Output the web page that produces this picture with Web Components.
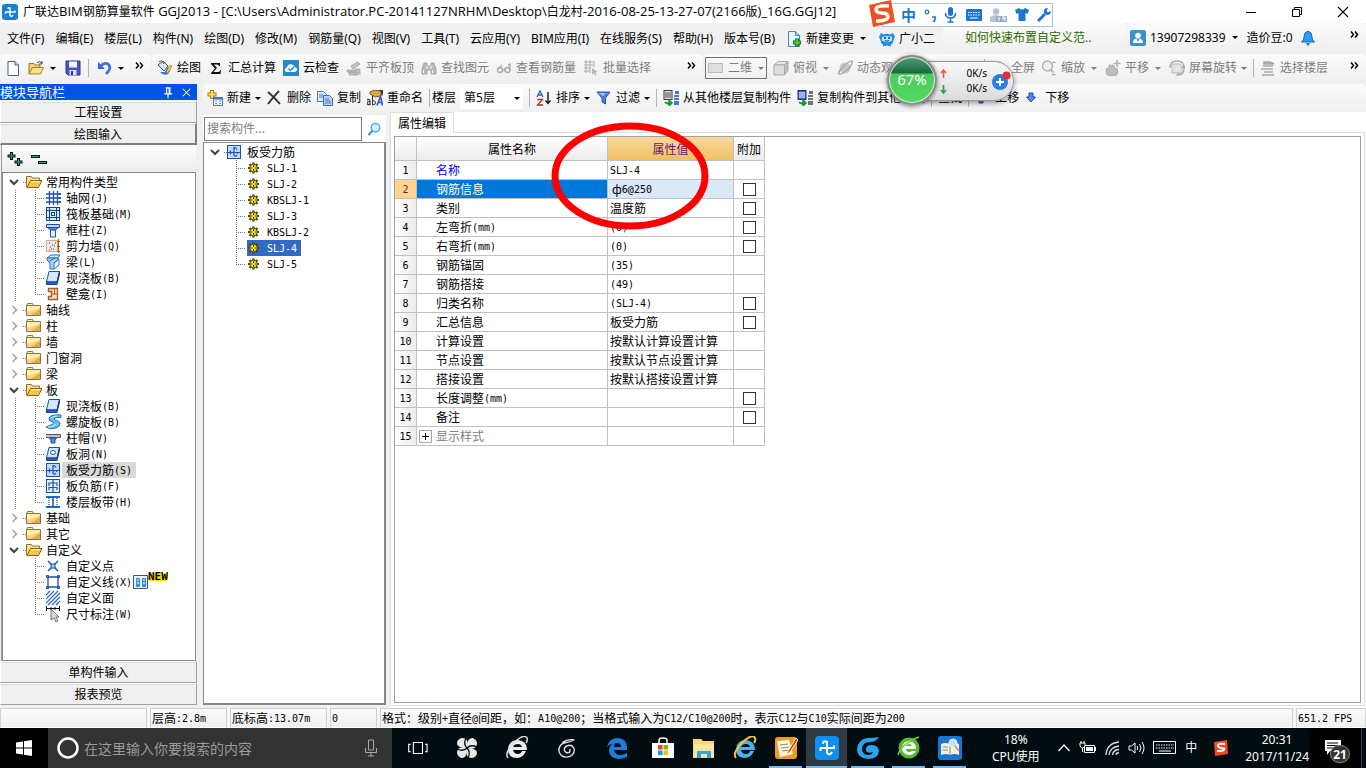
<!DOCTYPE html>
<html lang="zh-CN">
<head>
<meta charset="utf-8">
<title>广联达BIM钢筋算量软件 GGJ2013</title>
<style>
:root{--ui:"Noto Sans","Noto Sans CJK SC",sans-serif;--song:"Noto Sans CJK SC",sans-serif;--latin:"DejaVu Sans Mono",monospace}
body{margin:0;min-height:100vh;display:flex;flex-direction:column;position:relative;background:#f0f0f0;font:12px/16px var(--ui);color:#000;overflow-x:hidden}
</style>
</head>
<body>
<title-bar>广联达BIM钢筋算量软件 GGJ2013 - [C:\Users\Administrator.PC-20141127NRHM\Desktop\白龙村-2016-08-25-13-27-07(2166版)_16G.GGJ12]</title-bar>

<bar-row class="menu">
  <tool-band kind="flat">
    <menu-item>文件(F)</menu-item><menu-item>编辑(E)</menu-item><menu-item>楼层(L)</menu-item><menu-item>构件(N)</menu-item><menu-item>绘图(D)</menu-item><menu-item>修改(M)</menu-item><menu-item>钢筋量(Q)</menu-item><menu-item>视图(V)</menu-item><menu-item>工具(T)</menu-item><menu-item>云应用(Y)</menu-item><menu-item>BIM应用(I)</menu-item><menu-item>在线服务(S)</menu-item><menu-item>帮助(H)</menu-item><menu-item>版本号(B)</menu-item>
    <tool-item icon="docplus" caret>新建变更</tool-item><tool-item icon="mascot">广小二</tool-item>
  </tool-band>
  <tool-band kind="tip"><tip-link>如何快速布置自定义范..</tip-link></tool-band>
  <tool-band kind="account" more><tool-item icon="user" caret>13907298339</tool-item><tool-item>造价豆:0</tool-item><tool-item icon="bell" name="通知"></tool-item></tool-band>
</bar-row>

<bar-row>
  <tool-band kind="file" more><tool-item icon="new" name="新建"></tool-item><tool-item icon="open" name="打开" caret></tool-item><tool-item icon="save" name="保存"></tool-item><bar-sep></bar-sep><tool-item icon="undo" name="撤销" caret></tool-item></tool-band>
  <tool-band kind="draw" more><tool-item icon="paint">绘图</tool-item><tool-item icon="sigma">汇总计算</tool-item><tool-item icon="cloud">云检查</tool-item><tool-item icon="align" off>平齐板顶</tool-item><tool-item icon="binoc" off>查找图元</tool-item><tool-item icon="glasses" off>查看钢筋量</tool-item><tool-item icon="batch" off>批量选择</tool-item></tool-band>
  <tool-band kind="view" more><tool-item icon="rect" boxed caret off>二维</tool-item><tool-item icon="cube" caret off>俯视</tool-item><tool-item icon="orbit" off>动态观</tool-item><bar-sep wide></bar-sep><tool-item icon="mag" off>全屏</tool-item><tool-item icon="zoom" caret off>缩放</tool-item><tool-item icon="hand" caret off>平移</tool-item><tool-item icon="rotate" caret="near" off>屏幕旋转</tool-item><bar-sep></bar-sep><tool-item icon="floors" off>选择楼层</tool-item></tool-band>
</bar-row>

<work-area>
  <side-dock slot="dock">
    <tree-view>
      <tree-node icon="fopen" state="open">常用构件类型</tree-node>
      <tree-node level="2" icon="grid" rail>轴网(J)</tree-node>
      <tree-node level="2" icon="raft" rail>筏板基础(M)</tree-node>
      <tree-node level="2" icon="column" rail>框柱(Z)</tree-node>
      <tree-node level="2" icon="wall" rail>剪力墙(Q)</tree-node>
      <tree-node level="2" icon="beam" rail>梁(L)</tree-node>
      <tree-node level="2" icon="slab" rail>现浇板(B)</tree-node>
      <tree-node level="2" icon="niche" rail last>壁龛(I)</tree-node>
      <tree-node icon="fold" state="shut">轴线</tree-node>
      <tree-node icon="fold" state="shut">柱</tree-node>
      <tree-node icon="fold" state="shut">墙</tree-node>
      <tree-node icon="fold" state="shut">门窗洞</tree-node>
      <tree-node icon="fold" state="shut">梁</tree-node>
      <tree-node icon="fopen" state="open">板</tree-node>
      <tree-node level="2" icon="slab" rail>现浇板(B)</tree-node>
      <tree-node level="2" icon="spiral" rail>螺旋板(B)</tree-node>
      <tree-node level="2" icon="cap" rail>柱帽(V)</tree-node>
      <tree-node level="2" icon="hole" rail>板洞(N)</tree-node>
      <tree-node level="2" icon="rebar" rail current>板受力筋(S)</tree-node>
      <tree-node level="2" icon="negbar" rail>板负筋(F)</tree-node>
      <tree-node level="2" icon="strip" rail last>楼层板带(H)</tree-node>
      <tree-node icon="fold" state="shut">基础</tree-node>
      <tree-node icon="fold" state="shut">其它</tree-node>
      <tree-node icon="fopen" state="open">自定义</tree-node>
      <tree-node level="2" icon="point">自定义点</tree-node>
      <tree-node level="2" icon="line" fresh>自定义线(X)</tree-node>
      <tree-node level="2" icon="area">自定义面</tree-node>
      <tree-node level="2" icon="dim" last>尺寸标注(W)</tree-node>
    </tree-view>
  </side-dock>
  <tool-band slot="tools" kind="edit"><tool-item icon="add" caret="near">新建</tool-item><tool-item icon="del">删除</tool-item><tool-item icon="copy">复制</tool-item><tool-item icon="rename">重命名</tool-item><bar-sep></bar-sep><floor-picker></floor-picker><bar-sep></bar-sep><tool-item icon="sort" caret="near">排序</tool-item><tool-item icon="filter" caret="near">过滤</tool-item><bar-sep></bar-sep><tool-item icon="from">从其他楼层复制构件</tool-item><tool-item icon="to">复制构件到其他楼层</tool-item><bar-sep></bar-sep><tool-item>查找</tool-item><bar-sep></bar-sep><tool-item icon="up">上移</tool-item><tool-item icon="down">下移</tool-item></tool-band>
  <component-list slot="list">
    <tree-node icon="rebar" state="open">板受力筋</tree-node>
    <tree-node level="2" icon="gear">SLJ-1</tree-node>
    <tree-node level="2" icon="gear">SLJ-2</tree-node>
    <tree-node level="2" icon="gear">KBSLJ-1</tree-node>
    <tree-node level="2" icon="gear">SLJ-3</tree-node>
    <tree-node level="2" icon="gear">KBSLJ-2</tree-node>
    <tree-node level="2" icon="gear" selected>SLJ-4</tree-node>
    <tree-node level="2" icon="gear" last>SLJ-5</tree-node>
  </component-list>
  <property-editor slot="editor"></property-editor>
</work-area>

<status-bar></status-bar>
<task-bar></task-bar>
<ime-bar></ime-bar>
<speed-ball></speed-ball>

<script>
const ICONS={
new:'<path d="M3 1.5h7l3.500 3.500v10.500H3z" fill="#fff" stroke="#4a5f86"/><path d="M10 1.500V5h3.500" fill="#cfdcf2" stroke="#4a5f86"/>',
open:'<path d="M1 14V3.500h5l1 1.500h5v3" fill="#f0cf72" stroke="#9c7a22"/><path d="M1 14l3.500-6.500H15.500L12.500 14z" fill="#fbe08a" stroke="#a8832a"/><path d="M9 2.500q3-2 5 1m0-2.500v3h-3" fill="none" stroke="#444"/>',
save:'<path d="M1 1h14v14H3l-2-2z" fill="#4a53c4" stroke="#2c3390"/><path d="M4 1.500h8v6H4z" fill="#f2f4ff"/><path d="M4.500 10h7v5h-7z" fill="#d9dcf5"/><path d="M6 11h2v4H6z" fill="#2c3390"/>',
undo:'<path d="M2 2v7h7z" fill="#3467c8"/><path d="M4 7q4-5 8-3 4.500 4-2 10" fill="none" stroke="#3f74d6" stroke-width="2.800"/>',
docplus:'<path d="M2.500.500h7l4 4v11h-11z" fill="#eaf6ff" stroke="#3f87b8"/><path d="M9.500.500v4h4" fill="#9fd0ee" stroke="#3f87b8"/><path d="M11 7.500v8M7 11.500h8" stroke="#1d7a1a" stroke-width="4"/><path d="M11 8.500v6M8 11.500h6" stroke="#53c63e" stroke-width="2"/>',
mascot:'<path d="M0 6l2-4 3 1.500q3-1.500 6 0L14 2l2 4-1.500 3q0 3-2 4l-1 2.500-3.500-1-3.500 1-1-2.500q-2-1-2-4z" fill="#1f8fe0"/><path d="M3 6q5-2 10 0v3.500q-5 3.500-10 0z" fill="#b9e2fb"/><circle cx="6" cy="7" r="1" fill="#063a72"/><circle cx="10" cy="7" r="1" fill="#063a72"/><path d="M6 9.500q2 1.500 4 0" stroke="#063a72" fill="none"/>',
user:'<rect width="16" height="16" rx="2" fill="#3a93c8"/><circle cx="8" cy="5.500" r="2.800" fill="#fff"/><path d="M3 13q0-5 5-4.500 5-.500 5 4.500z" fill="#fff"/><path d="M6.500 9l1.500 3 1.500-3" fill="#3a93c8"/>',
bell:'<path d="M8 1q4 1 4 6 0 3 2.500 5h-13Q4 10 4 7q0-5 4-6z" fill="#2e9bff" stroke="#1768c0"/><path d="M6 13h4l-2 3z" fill="#1768c0"/>',
paint:'<path d="M1 5l5-4 5 5-4 5z" fill="#dbe6f8" stroke="#3b4d77"/><path d="M2 2q3-3 5 2" fill="none" stroke="#3b4d77"/><path d="M11 7l2 4-2 2-3-1z" fill="#39476a"/><path d="M15 6l-4 7-2 .500.500-2.500L13 5z" fill="#f3c94c" stroke="#8c6a13" stroke-width=".6"/><path d="M3 12q3 4 9 2l-3-2z" fill="#3a74d8"/>',
sigma:'<path d="M3 3h9v3h-1q0-1.500-2-1.500H6L9 8l-3.500 4H10q2 0 2.500-2h.500l-.500 4H3v-1l4-4.500L3 4z" fill="#111"/>',
cloud:'<rect width="16" height="16" fill="#2687cc"/><path d="M4 12q-3-.500-2-3 .500-1.500 2-1.500Q5 3.500 9 4.500q2 .500 2.500 2.500 3 .500 2.500 3-.500 2-3 2z" fill="#fff"/><path d="M5.500 8.500L7.500 10.500 11 7" stroke="#2687cc" stroke-width="1.500" fill="none"/>',
align:'<path d="M5 6l7-4 2 2-7 5z" fill="#c4c4c4" stroke="#aaa"/><path d="M1 10h9v2H1zM3 12h9v3H3zM9 9h5v6" fill="#bdbdbd" stroke="#9d9d9d" stroke-width=".7"/>',
binoc:'<path d="M3 3h3v3h4V3h3l2 6v5h-5v-4H6v4H1V9z" fill="#b9b9b9" stroke="#9a9a9a" stroke-width=".8"/><path d="M2.500 10v3M11.500 10v3M6 6v3M10 6v3" stroke="#fff"/>',
glasses:'<circle cx="4" cy="10" r="2.500" fill="none" stroke="#aaa" stroke-width="1.500"/><circle cx="11.500" cy="10" r="2.500" fill="none" stroke="#aaa" stroke-width="1.500"/><path d="M6.500 10h2.500M2 9l4-4M14 10V4l-2 1" stroke="#aaa" fill="none" stroke-width="1.300"/>',
batch:'<path d="M1 2h9M1 5h9M1 8h7M1 11h6M3 0v13M7 0v13M11 1v6" stroke="#aaa"/><path d="M9 8l6 4-3 .500 2 3-2-.500-1.500-2L9 15z" fill="#b5b5b5"/>',
rect:'<rect x=".500" y="3.500" width="14" height="9" fill="#dedede" stroke="#bbb"/>',
cube:'<path d="M1 5l4-3.500h10L11.500 5z" fill="#e8e8e8" stroke="#aaa"/><path d="M1 5h10.500v10H1z" fill="#ddd" stroke="#aaa"/><path d="M11.500 5L15 1.500v9L11.500 15z" fill="#bdbdbd" stroke="#aaa"/>',
orbit:'<circle cx="8" cy="8" r="5.500" fill="#c9c9c9"/><path d="M3 14q-4 0 3-7T15 1q1 4-5 9T3 14z" fill="none" stroke="#aaa" stroke-width="1.500"/>',
mag:'<circle cx="7" cy="7" r="5" fill="#eee" stroke="#b4b4b4" stroke-width="1.500"/><path d="M10.500 10.500l4 4" stroke="#b4b4b4" stroke-width="2.500"/>',
zoom:'<circle cx="6.500" cy="6" r="5" fill="#eee" stroke="#b4b4b4" stroke-width="1.500"/><path d="M9.500 9.500l3 3" stroke="#b4b4b4" stroke-width="2"/><path d="M13 1l2 2h-4zM10 14h5l-2.500 2z" fill="#aaa"/>',
hand:'<path d="M2 15l-1-6 3-1V5q2-1 2.500 2l1-2q2 0 2 3l3 1v4l-2 3z" fill="#bdbdbd" stroke="#a7a7a7"/><path d="M12 0v7M8.500 3.500h7" stroke="#b0b0b0" stroke-width="1.600"/>',
rotate:'<path d="M3 4h8l2 2v7H3z" fill="#e4e4e4" stroke="#bbb"/><path d="M1 8Q1 1 8 1q7 0 7 7M13 6l2 3 1-3M15 10q-1 5-7 5l2-2" fill="none" stroke="#aaa" stroke-width="1.300"/>',
floors:'<path d="M4 2h6l4 2H4zM3 6h10M1 9h12M4 12h9M2 15h12" fill="#bbb" stroke="#a9a9a9" stroke-width="1.600"/>',
add:'<path d="M5 0v9M.500 4.500h9" stroke="#a87c06" stroke-width="4"/><path d="M5 1v7M1.500 4.500h7" stroke="#ffe45a" stroke-width="2"/><rect x="6.500" y="7.500" width="9" height="8" fill="#eef4ff" stroke="#5779b5"/><path d="M6 8.500h10" stroke="#3d6fc9" stroke-width="2"/><path d="M8 11h2M12 11h2M8 13.500h2M12 13.500h2" stroke="#6c89bd"/>',
del:'<path d="M1 2q6 5 12 12M12 1Q7 6 1 14" stroke="#333" stroke-width="1.900" fill="none"/>',
copy:'<path d="M.500 1.500h6l3 3v7h-9z" fill="#dfeaff" stroke="#4a76c4"/><path d="M6.500 5.500h6l3 3v7h-9z" fill="#bcd3fb" stroke="#3a66b4"/><path d="M2 5h4M2 7h4M8 9h4M8 11h6M8 13h6" stroke="#4a76c4"/>',
rename:'<path d="M3 2l5-2 7 1-1 5-6 1-5-3z" fill="#d9a93f" stroke="#7c5b15"/><path d="M12 0h4v6z" fill="#3c3c3c"/><path d="M0 10q3-1.500 3 1v3.500q-3 .500-3-1.500 0-1.500 3-1.500" stroke="#333" fill="none" stroke-width="1.200"/><path d="M5.500 6v9q3.500 0 3-3-1-2-3-1" stroke="#333" fill="none"/><path d="M10 15.500l3.500-9 2 9M11 12.500h4" stroke="#2e5ed0" stroke-width="1.700" fill="none"/>',
sort:'<path d="M1 7l3-6 3 6M2 5h4" stroke="#3a58b8" fill="none" stroke-width="1.300"/><path d="M1.500 9.500h5l-5 5.500H7" stroke="#a33" fill="none" stroke-width="1.300"/><path d="M12 2v11" stroke="#111" stroke-width="1.400"/><path d="M9.500 10.500l2.500 3 2.500-3" stroke="#111" stroke-width="1.400" fill="none"/>',
filter:'<path d="M1 2h13L9.500 8v6L6 12V8z" fill="#4f83e0" stroke="#2855a8"/><path d="M3 3h7L7 6z" fill="#a9c7ff"/>',
from:'<rect x="1" y=".500" width="8" height="9" fill="#e9e9e9" stroke="#333"/><path d="M2 3h6M2 5h6M2 7h6" stroke="#444"/><path d="M12 1h4v3h-4zM11 5h5v2h-5zM11 8h5v2h-5zM11 11h5v4h-5z" fill="#3f7ad6"/><path d="M2 12q2 3 6 1M6 10l3 3-3 3z" stroke="#149a2b" stroke-width="1.500" fill="#149a2b"/>',
to:'<rect x="1" y=".500" width="8" height="9" fill="#3c6ad0" stroke="#1b3270"/><path d="M2 3h6M2 5h6M2 7h6" stroke="#fff"/><path d="M12 1h4v3h-4zM11 5h5v2h-5zM11 8h5v2h-5zM11 11h5v4h-5z" fill="#69727e"/><path d="M2 12q2 3 6 1M6 10l3 3-3 3z" stroke="#149a2b" stroke-width="1.500" fill="#149a2b"/>',
up:'<path d="M6 4l4.500 4.500H8V13H4V8.500H1.500z" fill="#5689ee" stroke="#2144a0"/>',
down:'<path d="M6 12l4.500-5H8V3H4v4H1.500z" fill="#5689ee" stroke="#2144a0"/>',
fold:'<path d="M.500 3.500l1-2h5l1 2" fill="#fbe9b0" stroke="#8d7434"/><path d="M.500 3.500h14v10H.500z" fill="#f7d574" stroke="#8d7434"/><path d="M1 4h13l-2 3-11 3z" fill="#fdeeb5"/><path d="M14 7v6H5z" fill="#c98f1d" opacity=".55"/>',
fopen:'<path d="M.500 13V2.500h5l1 1.500h7v3" fill="#fbe08a" stroke="#8d7434"/><path d="M1 13.500L4.500 6.500h11.500L12.500 13.500z" fill="#f7c64a" stroke="#8a6416"/><path d="M5 7.500h9" stroke="#fff3c4"/>',
grid:'<path d="M0 4h14M0 8h14M0 12h14M3.500 1v14M7.500 1v14M11.500 1v14" stroke="#1e50b0" stroke-width="1.300"/><path d="M13 3h2v2h-2zM13 7h2v2h-2zM13 11h2v2h-2z" fill="#1e50b0"/>',
raft:'<rect x=".500" y="1.500" width="13" height="13" fill="#d7e9ff" stroke="#12448f"/><path d="M3.500 2v12M10.500 2v12M1 4.500h12M1 11.500h12" stroke="#12448f"/><rect x="5.500" y="6.500" width="3" height="3" fill="#fff" stroke="#12448f"/>',
column:'<path d="M.500 2.500h13v3h-13z" fill="#b9d4ff" stroke="#1c4da5"/><path d="M2 6l2.500 2h5L12 6" fill="#5e93e8" stroke="#1c4da5"/><path d="M4.500 8h5v7h-5z" fill="#e8f2ff" stroke="#1c4da5"/>',
wall:'<path d="M.500 2.500h11v11h-11z" fill="#efe9e4" stroke="#d9a88c"/><path d="M12.500 1v14M11 3.500h3M11 8.500h3M11 13.500h3" stroke="#b8561c" stroke-width="1.200"/><path d="M3 5h1M6 7h1M4 9h1M7 11h1M9 5h1M3 12h1M8 8h1M5 11h1" stroke="#444"/>',
beam:'<path d="M1 4l4-3h9l-2 3z" fill="#d9edff" stroke="#2273c4"/><path d="M1 4h11v2L8 9v6H4V9L1 6z" fill="#a9d3fa" stroke="#2273c4"/><path d="M8 9l5-4v6l-5 4M2 8l7-4" stroke="#2273c4" fill="none"/>',
slab:'<path d="M3 1.500h10.500L11 12H.500z" fill="#d5e4ff" stroke="#1b4fae"/><path d="M.500 12H11l2.500-10.500V4L11 14.500H.500z" fill="#2c63cc" stroke="#1b3f90"/>',
niche:'<path d="M2.500 2.500h9v11h-9v-3h3v-5h-3z" fill="#f7dfc9" stroke="#b2591a" stroke-width="1.400"/><path d="M5 8h6M8.500 3v5" stroke="#b2591a"/>',
spiral:'<path d="M15 1Q5 0 3 4q-1 3 4 4 2 1-1 2.500L0 13q4 3 10 1 5-2 4-5-1-2-5-3-2-1 0-2 3-1 6-.500z" fill="#62bdf0" stroke="#2572bf"/><path d="M5 4q2-2 6-2M2 13q6 0 8-3" stroke="#d5f2ff" fill="none"/>',
cap:'<path d="M-.500 4.500h15v3h-15z" fill="#c4c4c4" stroke="#555"/><path d="M3.500 8h7L9 10v3H5v-3z" fill="#4d8be6" stroke="#1d4ea6"/>',
hole:'<path d="M3 1.500h10.500L11 12H.500z" fill="#d5e4ff" stroke="#1b4fae"/><path d="M.500 12H11l2.500-10.500V4L11 14.500H.500z" fill="#2c63cc" stroke="#1b3f90"/><ellipse cx="7" cy="6.500" rx="2.500" ry="2" fill="#fff" stroke="#1b4fae"/>',
rebar:'<rect x=".500" y="1.500" width="13" height="13" fill="#c3daff" stroke="#1d4fae"/><path d="M7 3v8.500q2 1.500 3-.500M1 8.500h12M7 4.500q2-1.500 3 1M3.500 6.500v4M10.500 8v2" stroke="#1d4fae" stroke-width="1.200" fill="none"/>',
negbar:'<rect x=".500" y="1.500" width="13" height="13" fill="#e2edff" stroke="#1d4fae"/><path d="M7 2v12M3 8V5h8v3M3 12V9.500h8V12" stroke="#1d4fae" stroke-width="1.200" fill="none"/>',
strip:'<path d="M0 3h14M0 13h14" stroke="#1d6cc8" stroke-width="2"/><path d="M7 3v10" stroke="#1d4fae" stroke-width="1.500"/><path d="M3 4v9M11 4v9" stroke="#222" stroke-dasharray="1 1"/>',
point:'<path d="M2 3l10 10M12 3L2 13" stroke="#1c55b8" stroke-width="1.500"/><path d="M5 6h4v4H5z" fill="#9cc4ff" stroke="#1c55b8"/>',
line:'<path d="M2 3h10v10H2z" fill="none" stroke="#1c4da5" stroke-width="1.300"/><path d="M.500 1.500h2v2h-2zM11.500 1.500h2v2h-2zM.500 12.500h2v2h-2zM11.500 12.500h2v2h-2z" fill="#4a8bf0" stroke="#1c4da5"/>',
area:'<path d="M0 5l4-4M0 9l8-8M0 13L12 1M2 15L14 3M6 15l8-8M10 15l4-4" stroke="#2468c8" stroke-width="1.200"/>',
dim:'<path d="M.500 0v5M13.500 0v5M1 2.500h12M5 1v3M9 1v3" stroke="#111"/><path d="M5 3l8 8h-3l2 4-2 1-2-4-3 2z" fill="#d5d5d5" stroke="#777"/>',
gear:'<path d="M6.500 2.500v11M1 8h11M2.600 4.100l7.800 7.800M10.400 4.100l-7.800 7.800" stroke="#4c4200" stroke-width="2.200"/><circle cx="6.500" cy="8" r="3.800" fill="#f2df2c" stroke="#564b00"/><path d="M6.500 5v6M3.500 8h6" stroke="#564b00"/><circle cx="6.500" cy="8" r="1" fill="#fff88a"/>',
find:'<circle cx="9" cy="6" r="4.500" fill="#d5efff" stroke="#58aeea" stroke-width="1.600"/><path d="M6 9l-4.500 5" stroke="#4b9bdc" stroke-width="2.400"/>',
pin:'<path d="M5 3h5M6 3v6M9.500 3v6M8.700 3v6M3.500 9.500h8.500M7.500 9.500V14" stroke="#fff" stroke-width="1.200" fill="none"/>',
shut:'<path d="M4 4l8 8M12 4l-8 8" stroke="#fff" stroke-width="1.100"/>',
plus2:'<path d="M4.500 1v8M.500 5h8M11.500 7v8M7.500 11h8" stroke="#111" stroke-width="3"/><path d="M4.500 2v6M1.500 5h6M11.500 8v6M8.500 11h6" stroke="#1aa89a"/>',
minus2:'<path d="M0 5.500h9M7 11.500h9" stroke="#111" stroke-width="3"/><path d="M1 5.500h7M8 11.500h7" stroke="#1aa89a"/>',
logo:'<rect width="16" height="16" rx="3" fill="#1682d4"/><path d="M8 3.500v8q2 2 3-.500M3 8h10V6.500M3.500 8v2M8 4q-2-1-2 1" stroke="#fff" stroke-width="1.400" fill="none"/>'
};
const svg=(n,s=16)=>`<svg viewBox="0 0 16 16" width="${s}" height="${s}" aria-hidden="true">${ICONS[n]||''}</svg>`;
/* Song-style runs: Latin characters take half the width of a Chinese one */
const song=t=>t.replace(/[\x21-\x7e]+(?: [\x21-\x7e]+)*/g,m=>`<span class="l">${m}</span>`);
const BASE=`*{box-sizing:border-box}svg{display:block;flex:none}button{font:inherit;color:inherit;border:0;background:none;padding:0;margin:0}.l{font:10px/1 var(--latin);vertical-align:1px}:host{white-space:nowrap;box-sizing:border-box}`;
class Part extends HTMLElement{
  constructor(){super();this.attachShadow({mode:'open'})}
  connectedCallback(){this.shadowRoot.innerHTML=`<style>${BASE}${this.css()}</style>${this.html()}`}
}
const def=(n,css,html)=>customElements.define(n,class extends Part{css(){return css}html(){return html(this)}});

def('title-bar',`:host{display:flex;align-items:center;height:23px;background:#fff;padding-left:2px;gap:5px;flex:none}
.w{font:13px/16px "Open Sans",sans-serif}
.win{display:flex;margin-left:auto;padding-top:0}.win button{width:46px;height:23px;display:grid;place-items:center}`,
e=>`${svg('logo')}<span>${e.textContent.replace(/[\x20-\x7e]+/g,m=>`<span class="w">${m}</span>`)}</span><div class="win">
<button aria-label="最小化"><svg width="12" height="12"><path d="M1 6.500h10" stroke="#000"/></svg></button>
<button aria-label="还原"><svg width="12" height="12"><path d="M1.500 3.500h7v7h-7zM3.500 3V1.500h7v7H9" stroke="#000" fill="none"/></svg></button>
<button aria-label="关闭"><svg width="12" height="12"><path d="M1 1l10 10M11 1L1 11" stroke="#000" stroke-width="1.100"/></svg></button></div>`);

def('bar-row',`:host{display:flex;height:30px;flex:none;gap:1px;background:#f0f0f0}:host(.menu){height:31px}`,()=>`<slot></slot>`);

def('tool-band',`:host{display:flex;align-items:center;gap:7px;padding:0 5px;border-radius:4px;background:linear-gradient(#fbfbfb,#efefef);flex:none;margin-bottom:2px}
:host([kind=flat]){background:none;gap:11px;padding:0 7px;margin:0}
:host([kind=tip]){flex:1;padding-left:22px}
:host([kind=account]){width:239px;padding-left:3px}
:host([kind=file]){width:151px}:host([kind=draw]){width:551px}:host([kind=view]){flex:1;padding-left:1px;gap:6px;min-width:0}
:host([kind=edit]){height:28px;margin:0;padding-left:4px;gap:6px}
.more{align-self:flex-start;margin:8px 2px 0 auto}`,
e=>`<slot></slot>${e.hasAttribute('more')?'<button class="more" aria-label="更多"><svg width="9" height="7"><path d="M1 .500l2.500 3L1 6.500M5 .500l2.500 3L5 6.500" stroke="#000" stroke-width="1.500" fill="none"/></svg></button>':''}`);

def('bar-sep',`:host{width:1px;height:18px;background:#b4b4b4;flex:none}:host([wide]){margin-left:85px}`,()=>'');
def('menu-item',`:host{display:block}`,()=>`<button><slot></slot></button>`);
def('tip-link',`:host{display:block}a{color:#2d6a00;text-decoration:none}`,()=>`<a href="#"><slot></slot></a>`);
def('tool-item',`:host{display:block;flex:none}button{display:flex;align-items:center;gap:4px}
:host([off]){color:#7d7d7d}:host([boxed]) button{border:1px solid #70707a;padding:2px 0 2px 2px}
.c{width:10px;display:grid;place-items:center}:host([caret=near]) .c{width:6px}`,
e=>{const t=e.textContent;return `<button${t?'':` aria-label="${e.getAttribute('name')}"`}>${e.hasAttribute('icon')?svg(e.getAttribute('icon')):''}${t?'<span><slot></slot></span>':''}${e.hasAttribute('caret')?'<span class="c"><svg width="6" height="3"><path d="M0 0h6L3 3z" fill="currentColor"/></svg></span>':''}</button>`});
def('floor-picker',`:host{display:flex;align-items:center;gap:4px;margin-left:-4px}
div{position:relative}select{appearance:none;font:inherit;border:0;background:#fff;width:63px;height:22px;padding:0 4px;color:#000}
svg{position:absolute;right:3px;top:10px}`,
()=>`<label for="f">楼层</label><div><select id="f"><option>第5层</option></select><svg width="6" height="3"><path d="M0 0h6L3 3z"/></svg></div>`);

def('work-area',`:host{display:flex;flex:1;gap:6px;background:#f0f0f0}
.dock{width:197px;display:flex;flex:none}.right{flex:1;display:flex;flex-direction:column;min-width:0}
.row{flex:1;display:flex;gap:4px}.list{width:183px;display:flex;flex:none}.ed{flex:1;display:flex}`,
()=>`<div class="dock"><slot name="dock"></slot></div><div class="right"><slot name="tools"></slot><div class="row"><div class="list"><slot name="list"></slot></div><div class="ed"><slot name="editor"></slot></div></div></div>`);

def('side-dock',`:host{display:flex;flex-direction:column;flex:1;padding-bottom:3px;font-family:var(--song)}
header{display:flex;align-items:center;background:#0054e3;color:#fff;height:16px;margin-bottom:1px}header b{font-weight:400;font-size:13px;margin-right:auto}
header button{margin-right:3px}
.nav{height:22px;flex:none;border:1px solid #a0a0a0;border-top-color:#fff;border-left-color:#fff;background:#f0f0f0;box-shadow:inset 0 1px #ddd;width:100%}
.nav.on{border-right:2px solid #808080;border-bottom:2px solid #808080}
.pane{flex:1;display:flex;flex-direction:column;margin:0 1px;border-left:1px solid #a0a0a0}
.tools{height:27px;display:flex;align-items:center;gap:8px;padding-left:5px;background:linear-gradient(#fdfdfd,#ececec)}
.tree{flex:1;border:1px solid #828790;background:#fff;padding-top:1px}`,
()=>`<header><b>模块导航栏</b><button aria-label="固定">${svg('pin',15)}</button><button aria-label="关闭">${svg('shut',15)}</button></header>
<button class="nav">工程设置</button><button class="nav on">绘图输入</button>
<div class="pane"><div class="tools"><button aria-label="展开">${svg('plus2')}</button><button aria-label="折叠">${svg('minus2')}</button></div><div class="tree"><slot></slot></div></div>
<button class="nav">单构件输入</button><button class="nav">报表预览</button>`);
def('tree-view',`:host{display:block}`,()=>`<slot></slot>`);

def('tree-node',`:host{display:flex;height:16px;padding-left:5px;align-items:center;font-family:var(--song);position:relative}
:host([level="2"]){padding-left:32px}
:host([rail]){background:repeating-linear-gradient(#777 0 1px,#fff 1px 2px) 12px 0/1px 100% no-repeat}
.dots{width:6px;height:1px;background:repeating-linear-gradient(90deg,#777 0 1px,#fff 1px 2px) 3px 0/3px 1px no-repeat}
.g{width:11px;height:16px;background:repeating-linear-gradient(90deg,#777 0 1px,#fff 1px 2px) 0 8px/10px 1px no-repeat,repeating-linear-gradient(#777 0 1px,#fff 1px 2px) 0 0/1px 100% no-repeat}
:host([last]) .g{background-size:10px 1px,1px 8px}
.t{padding:0 4px;height:16px;line-height:16px}
:host([current]) .t{background:#d9d9d9}
:host([selected]) .s{background:#316ac5}
:host([selected]) .t{color:#fff}
.s{display:flex;align-items:center}
.new{position:absolute;left:145px;top:-1px;font:bold 11px/8px var(--latin);background:#ffdc00;color:#000;border-radius:3px}`,
e=>{const s=e.getAttribute('state'),l2=e.getAttribute('level')==='2';
const lead=l2?'<i class="g"></i>':`<svg width="12" height="12">${s==='open'?'<path d="M2 4l4 4 4-4" stroke="#404040" stroke-width="2" fill="none"/>':'<path d="M4.500 2l4 4-4 4" stroke="#a0a0a0" stroke-width="1.500" fill="none"/>'}</svg><i class="dots"></i>`;
return `${lead}<span class="s">${svg(e.getAttribute('icon'))}<span class="t">${song(e.textContent)}</span></span>${e.hasAttribute('fresh')?'<svg width="15" height="16" style="margin-left:-3px"><path d="M.500 1.500h14v13H.500z" fill="#e8f3ff" stroke="#456"/><path d="M3 4h4v9H3zM9 4h4v9H9z" fill="#3d8fe8"/><path d="M4 6h2M4 9h2M10 6h2M10 9h2" stroke="#fff"/></svg><span class="new">NEW</span>':''}`});

def('component-list',`:host{display:flex;flex-direction:column;flex:1;padding:3px 0 3px;font-family:var(--song)}
form{display:flex;background:#fff;height:27px;padding:2px 0 1px 1px;margin:0}
input{flex:1;min-width:0;border:1px solid #7a7a7a;background:#fff;font:12px var(--song);padding:0 2px 4px;outline:0}input::placeholder{color:#808080}
form button{width:24px;display:grid;place-items:center}
.tree{flex:1;background:#fff;border:1px solid #828790;border-right-width:2px;border-bottom-width:2px;padding-top:1px}`,
()=>`<form><input aria-label="搜索构件" placeholder="搜索构件..."><button type="button" aria-label="搜索">${svg('find',15)}</button></form><div class="tree"><slot></slot></div>`);

const ROWS=[['名称','SLJ-4',0],['钢筋信息','ф6@250',1],['类别','温度筋',1],['左弯折(mm)','(0)',1],['右弯折(mm)','(0)',1],['钢筋锚固','(35)',0],['钢筋搭接','(49)',0],['归类名称','(SLJ-4)',1],['汇总信息','板受力筋',1],['计算设置','按默认计算设置计算',0],['节点设置','按默认节点设置计算',0],['搭接设置','按默认搭接设置计算',0],['长度调整(mm)','',1],['备注','',1],['显示样式','',0]];
def('property-editor',`:host{display:flex;flex-direction:column;flex:1;padding:0 1px 2px 0;font-family:var(--song);background:#fff}
.tabs{display:flex;height:21px;border-bottom:1px solid #dcdcdc}.tab{width:64px;height:21px;background:#fff;border:1px solid #dcdcdc;border-bottom:0;text-align:center}
.page{flex:1;border:1px solid #dcdcdc;border-top:0;padding:3px 3px 2px;display:flex}
.sheet{flex:1;border:1px solid #a0a0a0;position:relative}
table{border-collapse:separate;border-spacing:0;table-layout:fixed;width:370px}
th,td{border:solid #c0c0c0;border-width:0 1px 1px 0;padding:0;height:19px;line-height:18px;font-weight:400;text-align:left;overflow:hidden}
thead th{height:24px;line-height:22px;text-align:center;background:linear-gradient(#fff,#ececec)}
thead .hot{background:linear-gradient(#f9d99f,#f0c060);color:#6b1468}
tbody th{text-align:center;background:linear-gradient(90deg,#fff,#ececec)}
td:nth-child(2){padding-left:19px;position:relative}td:nth-child(3){padding-left:2px}td:nth-child(4){text-align:center}
tr.key td:nth-child(2){color:#00f}tr.on th{background:#ffd58c;color:#6b1468}tr.on td:nth-child(2){background:#0078d7;color:#fff}tr.on td:nth-child(3){background:#d9e9f7;padding-left:4px}
tr.dim td:nth-child(2){color:#808080}
input{appearance:none;width:13px;height:13px;border:1px solid #333;background:#fff;display:block;margin:0 auto}
.x{position:absolute;left:2px;top:3px;width:13px;height:13px;border:1px solid #a8a8a8;background:#fff;display:grid;place-items:center}
.ring{position:absolute;left:156px;top:-15px;pointer-events:none}`,
()=>`<div class="tabs"><button class="tab">属性编辑</button></div><div class="page"><div class="sheet"><table>
<colgroup><col style="width:22px"><col style="width:191px"><col style="width:126px"><col style="width:31px"></colgroup>
<thead><tr><th></th><th>属性名称</th><th class="hot">属性值</th><th>附加</th></tr></thead><tbody>${ROWS.map((r,i)=>`<tr class="${i==0?'key':i==1?'on':i==14?'dim':''}"><th>${song(''+(i+1))}</th><td>${i==14?'<button class="x" aria-label="展开"><svg width="9" height="9"><path d="M4.500 1v7M1 4.500h7" stroke="#000"/></svg></button>':''}${song(r[0])}</td><td>${song(r[1])}</td><td>${r[2]?`<input type="checkbox" aria-label="${r[0]}附加">`:''}</td></tr>`).join('')}</tbody></table>
<svg class="ring" width="160" height="108"><ellipse cx="79" cy="54" rx="75" ry="50" fill="none" stroke="#f00" stroke-width="7"/></svg></div></div>`);

def('status-bar',`:host{display:flex;height:20px;gap:3px;background:#f6f6f6;font-family:var(--song);flex:none}
span.b{border:1px solid #d0d0d0;border-bottom-color:#fff;background:linear-gradient(#fbfbfb,#efefef);padding-left:1px;line-height:18px;height:20px;overflow:hidden}`,
()=>[['',147],['层高:2.8m',77],['底标高:13.07m',97],['0',47],['格式：级别+直径@间距，如：A10@200；当格式输入为C12/C10@200时，表示C12与C10实际间距为200',0],['651.2 FPS',70]].map(([t,w])=>`<span class="b" style="${w?`width:${w}px`:'flex:1'}">${song(t)}</span>`).join(''));

const APPS={
task:['任务视图','<path d="M8 6h10v12H8zM5 8H3v8h2M21 8h2v8h-2" fill="none" stroke="#fff" stroke-width="1.200"/>'],
fan:['风车','<g fill="#e8e8e8"><path d="M12 12Q1 12 2 6q3-6 9-3 3 3 1 9z"/><path d="M12 12Q12 1 18 2q6 3 3 9-3 3-9 1z"/><path d="M12 12q11 0 10 6-3 6-9 3-3-3-1-9z"/><path d="M12 12q0 11-6 10-6-3-3-9 3-3 9-1z"/></g><path d="M12 12Q8 8 11 2M12 12q4-4 10-1M12 12q4 4 1 10M12 12q-4 4-10 1" stroke="#020d12" fill="none" stroke-width="1.300"/>'],
ie1:['浏览器','<path d="M21 15q-3 7-9 7-9 0-9-9 1-9 10-9 9 1 9 10H8q1 4 5 4 3 0 4-3zM8 11h9q-1-3-4-3-4 0-5 3z" fill="#eee"/><path d="M3 22Q-1 17 9 7T22 2q1 2-1 5" fill="none" stroke="#ddd" stroke-width="1.500"/>'],
swirl:['广联达','<path d="M20 3q-5 3-9 3-7 1-8 8 1 8 9 8 8-1 8-8-1-5-6-5-5 1-5 5 1 4 5 3 2-1 1-4M20 3q-8-1-13 3" fill="none" stroke="#ddd" stroke-width="1.500"/>'],
edge:['Edge','<path d="M2 11Q4 2 13 2q9 1 9 9v3H9q1 5 6 5 4 0 7-2v4q-4 2-9 2-9-1-9-9 1-6 7-8-2 2-2 5h7q0-4-4-4-6 0-10 4z" fill="#1b7fdd"/>'],
store:['应用商店','<path d="M1 7h22v15H1z" fill="#fff"/><path d="M8 7V4q0-2 4-2t4 2v3" fill="none" stroke="#fff" stroke-width="1.500"/><path d="M7 9h4.500v4.500H7z" fill="#e8441f"/><path d="M12.500 9H17v4.500h-4.500z" fill="#7cb700"/><path d="M7 14.500h4.500V19H7z" fill="#00a1f0"/><path d="M12.500 14.500H17V19h-4.500z" fill="#fdb900"/>'],
files:['文件资源管理器','<path d="M1 3h8l2 2h11v17H1z" fill="#f8d775"/><path d="M2 8h20v13H2z" fill="#fde69b"/><path d="M5 22v-7h14v7h-4v-4H9v4z" fill="#35a5e0"/>'],
ie:['Internet Explorer','<path d="M21 15q-3 7-9 7-9 0-9-9 1-9 10-9 9 1 9 10H8q1 4 5 4 3 0 4-3zM8 11h9q-1-3-4-3-4 0-5 3z" fill="#46b3ee"/><path d="M3 22Q-1 17 9 7T22 2q1 2-1 5" fill="none" stroke="#f4c52e" stroke-width="2"/>'],
note:['笔记','<rect x="1" y="1" width="22" height="22" rx="3" fill="#f29a1e"/><path d="M3 5l12-1 4 14-13 3z" fill="#fff8df"/><path d="M6 9l8-1M7 12l8-1M8 15l7-1" stroke="#887"/><path d="M22 2l-8 13-2 4 4-3 8-12z" fill="#a8511c" stroke="#fff2cc"/>'],
ggj:['GGJ2013','<rect x="0" y="0" width="24" height="24" rx="4" fill="#0d8ff5"/><path d="M12 5v12q3 3 5-1M5 12h14V9.500M5.500 12v3M12 6q-4-2-4 2" stroke="#fff" stroke-width="2" fill="none"/>'],
gld:['广联达G','<path d="M23 1q-3 5-9 5-8 0-8 8 1 5 6 5 4 0 5-3-5 2-7-1-1-5 4-6 8-1 9 6-1 8-11 8Q1 22 1 13 2 3 12 2q7 0 11-1z" fill="#27a4ee"/>'],
green:['360浏览器','<circle cx="12" cy="12" r="10.500" fill="#59b92e"/><path d="M19 15q-2 4-7 4-7-1-7-7 1-7 7-7 7 1 7 8H9q0 3 3 3 2 0 3-1zM9 10h6q-1-2-3-2t-3 2z" fill="#fff"/><path d="M1 19Q4 8 22 1" stroke="#6fd041" fill="none" stroke-width="1.500"/>'],
book:['阅读','<rect width="24" height="24" rx="3" fill="#1976d2"/><path d="M3 8q5-2 9 0 4-2 9 0v11q-5-2-9 0-4-2-9 0z" fill="#f5f0df"/><path d="M12 8v11M5 11h5M5 14h5" stroke="#888"/><circle cx="15" cy="7" r="4" fill="#b8e4ff" stroke="#eee"/><path d="M17 10l4 5" stroke="#d88" stroke-width="2"/>']};
def('task-bar',`:host{display:flex;height:40px;background:#020d12;color:#fff;flex:none}
.start{width:48px;background:#000;display:grid;place-items:center}
.q{width:344px;background:#333;display:flex;align-items:center;padding:0 14px 0 8px;gap:4px}.q input{flex:1;min-width:0;border:0;background:none;outline:0;padding:0;font:14px var(--ui);color:#fff}.q input::placeholder{color:#9a9a9a}
.a{width:50px;height:40px;display:grid;place-items:center;flex:none}.n{width:41px}.run{box-shadow:inset 0 -2px #76b9ed;width:33px;margin:0 4px}.act{background:#2f3b40;width:41px;margin:0;box-shadow:inset 0 -2px #76b9ed}
.cpu,.clk{text-align:center;line-height:17px;align-self:center}.cpu{margin-left:22px}
.tray{display:flex;align-items:center;margin-left:auto;gap:8px}
.end{width:53px;background:#000;position:relative;border-right:1px solid #444;margin-right:4px}.end svg{position:absolute;left:15px;top:11px}
.end b{position:absolute;left:21px;top:17px;width:20px;height:18px;border-radius:9px;background:#333;border:1px solid #888;font-weight:700;line-height:17px;text-align:center}`,
()=>{const run=['note','gld','green','book'];return `<button class="start" aria-label="开始"><svg width="16" height="16"><path d="M0 2.500l7-1v6H0zM8 1.300L16 0v7.500H8zM0 8.500h7v6l-7-1zM8 8.500h8V16l-8-1.300z" fill="#fff"/></svg></button>
<div class="q"><svg width="24" height="24"><circle cx="12" cy="12" r="9.500" fill="none" stroke="#fff" stroke-width="2.500"/></svg><input aria-label="搜索" placeholder="在这里输入你要搜索的内容"><svg width="14" height="18"><path d="M4.500 1h5v10h-5zM1.500 9v4.500h11V9M7 13.500V17M4 17h6" fill="none" stroke="#aaa"/></svg></div>
${Object.entries(APPS).map(([k,[n,p]],i)=>`<button class="a ${i>4?'n':''} ${run.includes(k)?'run':''} ${k==='ggj'?'act':''}" aria-label="${n}"><svg viewBox="0 0 24 24" width="${k==='task'||k==='swirl'?22:24}" height="${k==='task'||k==='swirl'?22:24}">${p}</svg></button>`).join('')}
<div class="cpu">18%<br>CPU使用</div>
<div class="tray"><svg width="14" height="10"><path d="M1.500 8L7 2l5.500 6" stroke="#fff" fill="none" stroke-width="1.300"/></svg>
<svg width="18" height="14"><path d="M5.500 4.500h10v7h-10z" fill="none" stroke="#fff"/><path d="M7 6h7v4H7zM16 6h1v4h-1z" fill="#fff"/><path d="M1 2h5v3q-1 2-2.500 2T1 5zM2 0v2M5 0v2M3.500 7v4" stroke="#fff" fill="#111"/></svg>
<svg width="15" height="15"><path d="M1 14Q2 2 14 1M4 14Q5 6 14 5M7.500 14Q8 9 14 8.500M11 14q0-2 3-2.500" fill="none" stroke="#ddd" stroke-width="1.300"/></svg>
<svg width="17" height="14"><path d="M1 5h2.500L7 2v10L3.500 9H1z" fill="none" stroke="#fff"/><path d="M9 5q1.500 2 0 4M11.500 3q3 4 0 8M14 1q4 6 0 12" stroke="#fff" fill="none"/></svg>
<svg width="24" height="14"><path d="M.500.500h22v12H.500z" fill="none" stroke="#fff"/><path d="M3 4h18M3 7h18" stroke="#fff" stroke-dasharray="1.500 1"/><path d="M6 10h12" stroke="#fff"/></svg>
<span>中</span><svg width="32" height="16"><path d="M9 2l13-2 1 14-13 2z" fill="#ef4a22"/><path d="M20 4q-7-1-7 1.500t6 3q1 3-7 2.500" stroke="#fff" stroke-width="2" fill="none"/></svg>
<div class="clk">20:31<br>2017/11/24</div></div>
<button class="end" aria-label="通知"><svg width="18" height="18"><path d="M1 1h16v11H6l-3 4v-4H1z" fill="#fff"/><path d="M3 4h11M3 6.500h11M3 9h8" stroke="#000"/></svg><b>21</b></button>`});

def('ime-bar',`:host{position:absolute;right:313px;top:0;display:flex;align-items:center;width:185px;height:28px;z-index:3}
.b{position:absolute;left:14px;right:0;top:3px;height:24px;background:#fff;border:1px solid #a9c4de;display:flex;align-items:center;gap:8px;padding-left:18px;color:#1b75d0}
b{font-size:15px;line-height:20px}.s{position:absolute;left:0;top:0}`,
()=>`<div class="b"><b>中</b><svg width="12" height="14"><circle cx="3" cy="4" r="1.800" fill="none" stroke="#1b75d0" stroke-width="1.300"/><path d="M8 9h3v2q0 2-2 3" stroke="#1b75d0" stroke-width="1.700" fill="none"/></svg>
<svg width="14" height="16"><rect x="4" y="0" width="5" height="9" rx="2.500" fill="#1b75d0"/><path d="M1.500 6q0 5 5 5t5-5M6.500 11v4M3.500 15h6" stroke="#1b75d0" stroke-width="1.500" fill="none"/></svg>
<svg width="16" height="13"><rect width="16" height="12" rx="1" fill="#1b75d0"/><path d="M2 3.500h12M2 6h12" stroke="#fff" stroke-dasharray="1.500 1"/><path d="M4 9h8" stroke="#fff"/></svg>
<svg width="17" height="15"><circle cx="6" cy="3.500" r="3.200" fill="#b5c3da"/><path d="M0 14V9q6-4 11 0v5z" fill="#b5c3da"/><path d="M6 8h11v6H6z" fill="#9aaac6"/><path d="M9 9v4M12 9h3v4M12 11h3" stroke="#fff" fill="none"/></svg>
<svg width="14" height="14"><path d="M4 0q3 3 6 0l4 2-1.500 4-2-1V13h-7V5l-2 1L0 2z" fill="#1b75d0"/></svg>
<svg width="14" height="14"><path d="M1 13l7-7" stroke="#1b75d0" stroke-width="3"/><path d="M11 0Q6 0 7 5l3 2q4 0 4-4l-3 1.500L9.500 3z" fill="#1b75d0"/></svg></div>
<svg class="s" width="28" height="28"><path d="M1 5L23 0l4 22-22 5z" fill="#f04f1e"/><path d="M21 6Q8 5 8 9.500q0 3.500 6 3.500t6 4q-1 4-12 4" stroke="#fff" stroke-width="3.400" fill="none"/></svg>`);

def('speed-ball',`:host{position:absolute;left:886px;top:55px;width:130px;height:50px;z-index:3}
.pill{position:absolute;left:24px;top:6px;width:104px;height:40px;border-radius:20px;border:1px solid #999;background:linear-gradient(#f8f8f8,#dcdcdc);box-shadow:0 2px 5px #0006;display:grid;grid-template-columns:12px 32px 20px;column-gap:4px;padding:4px 0 4px 28px;line-height:15px;align-items:center;font-size:10px;text-align:right}
.ball{position:absolute;left:1px;top:0;width:50px;height:50px;border-radius:25px;border:2px solid #8a8a8a;box-shadow:0 1px 4px #0008,inset 0 0 0 1px #e8f5e8;background:linear-gradient(#4f9f78 0,#176b3e 16px,#4cc95c 17px,#52d964);color:#fff;font-size:15px;line-height:44px;text-align:center}
.add{grid-column:3;grid-row:1/3}`,
()=>`<div class="pill"><svg width="9" height="10"><path d="M4.500 1v8M2 4l2.500-3L7 4" stroke="#ee5a3c" stroke-width="1.600" fill="none"/></svg><span>0K/s</span><svg width="9" height="10"><path d="M4.500 1v8M2 6l2.500 3L7 6" stroke="#22a04a" stroke-width="1.600" fill="none"/></svg><span>0K/s</span><svg class="add" width="20" height="20"><circle cx="9" cy="11" r="8" fill="#2f7ce0"/><path d="M9 7v8M5 11h8" stroke="#fff" stroke-width="2"/><circle cx="15.500" cy="4.500" r="4" fill="#dd2f2f"/></svg></div><div class="ball">67%</div>`);
</script>
</body>
</html>
